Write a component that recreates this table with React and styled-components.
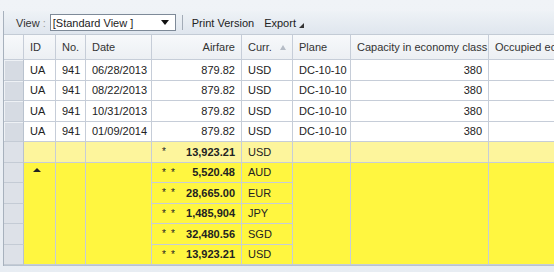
import { Fragment } from "react";
import styled, { createGlobalStyle } from "styled-components";

const GlobalStyle = createGlobalStyle`
  html, body {
    margin: 0;
    padding: 0;
    background: #e9eef4;
    font-family: "Liberation Sans", Arial, sans-serif;
    font-size: 11px;
    color: #222;
  }
`

const Page = styled.div`
  width: 554px;
  height: 272px;
  overflow: hidden;
  padding-top: 11px;
  box-sizing: border-box;
  background: linear-gradient(#f0f3f7, #e8edf3);
`

const Frame = styled.div`
  margin-left: 3px;
  border-left: 1px solid #a7b1bd;
  overflow: hidden;
`

const Toolbar = styled.div`
  display: flex;
  align-items: center;
  height: 23px;
  padding-left: 12px;
  background: linear-gradient(#eef2f6, #dfe6ee);
  border-bottom: 1px solid #c3cbd5;
  color: #333;
`

const Label = styled.span`
  margin-right: 4px;
  & b {
    font-weight: normal;
    color: #999;
  }
`

const Select = styled.div`
  display: flex;
  align-items: center;
  justify-content: space-between;
  width: 126px;
  height: 17px;
  box-sizing: border-box;
  border: 1px solid #7e8a98;
  background: #fff;
  padding: 0 6px 0 2px;
  color: #222;
`

const DownArrow = styled.span`
  width: 0;
  height: 0;
  border-left: 4px solid transparent;
  border-right: 4px solid transparent;
  border-top: 5px solid #111;
`

const Separator = styled.span`
  width: 1px;
  height: 15px;
  background: #a3acb7;
  margin: 0 9px 0 6px;
`

const ToolButton = styled.span`
  display: flex;
  align-items: center;
  margin-right: 10px;
  color: #222;
`

const CornerArrow = styled.span`
  width: 0;
  height: 0;
  margin-left: 3px;
  margin-top: 5px;
  border-left: 5px solid transparent;
  border-bottom: 5px solid #333;
`

const Grid = styled.div`
  display: grid;
  grid-template-columns: 20px 32px 30px 66px 90px 51px 58px 138px 160px;
  grid-template-rows: 25px repeat(10, 20.5px);
  width: 645px;
  border-bottom: 1px solid #b9c3cf;
`

const Cell = styled.div`
  box-sizing: border-box;
  border-right: 1px solid #c6cdd8;
  border-bottom: 1px solid #c6cdd8;
  padding: 0 6px;
  display: flex;
  align-items: ${(p) => (p.$top ? "flex-start" : "center")};
  justify-content: ${(p) => (p.$right ? "flex-end" : "flex-start")};
  white-space: nowrap;
  overflow: hidden;
  font-weight: ${(p) => (p.$bold ? "bold" : "normal")};
  background: ${(p) =>
    p.$tone === "total" ? "#fdf59c" : p.$tone === "group" ? "#fff640" : "#fff"};
  grid-row: ${(p) => (p.$span ? `span ${p.$span}` : "auto")};
  color: #222;
`

const HeadCell = styled.div`
  box-sizing: border-box;
  border-right: 1px solid #c6cdd8;
  border-bottom: 1px solid #c6cdd8;
  padding: 0 6px;
  display: flex;
  align-items: center;
  justify-content: ${(p) => (p.$right ? "flex-end" : "flex-start")};
  white-space: nowrap;
  overflow: hidden;
  background: linear-gradient(#f7f9fb, #eceff3);
  color: #333;
`

const Selector = styled.div`
  box-sizing: border-box;
  border-right: 1px solid #b9c2ce;
  border-bottom: 1px solid #c4cbd5;
  background: ${(p) => (p.$light ? "#dde1e8" : "#d6dbe3")};
  box-shadow: ${(p) => (p.$light ? "none" : "inset 1px 1px 0 #eef1f5")};
`

const SortArrow = styled.span`
  width: 0;
  height: 0;
  margin-left: 8px;
  border-left: 3px solid transparent;
  border-right: 3px solid transparent;
  border-bottom: 5px solid #b5bcc6;
`

const GroupArrow = styled.span`
  width: 0;
  height: 0;
  margin: 5px 0 0 3px;
  border-left: 4px solid transparent;
  border-right: 4px solid transparent;
  border-bottom: 4px solid #222;
`

const Stars = styled.span`
  font-weight: normal;
  font-size: 10px;
  margin-right: auto;
  padding-left: 4px;
  letter-spacing: 5px;
`

const flights = ["06/28/2013", "08/22/2013", "10/31/2013", "01/09/2014"];
const subtotals = [
  ["5,520.48", "AUD"],
  ["28,665.00", "EUR"],
  ["1,485,904", "JPY"],
  ["32,480.56", "SGD"],
  ["13,923.21", "USD"],
];

const App = () => {
  return (
    <Page>
      <GlobalStyle />
      <Frame>
        <Toolbar>
          <Label>
            View <b>:</b>
          </Label>
          <Select>
            [Standard View ]
            <DownArrow />
          </Select>
          <Separator />
          <ToolButton>Print Version</ToolButton>
          <ToolButton>
            Export
            <CornerArrow />
          </ToolButton>
        </Toolbar>
        <Grid>
          <HeadCell />
          <HeadCell>ID</HeadCell>
          <HeadCell>No.</HeadCell>
          <HeadCell>Date</HeadCell>
          <HeadCell $right>Airfare</HeadCell>
          <HeadCell>
            Curr.
            <SortArrow />
          </HeadCell>
          <HeadCell>Plane</HeadCell>
          <HeadCell>Capacity in economy class</HeadCell>
          <HeadCell>Occupied economy class</HeadCell>

          {flights.map((date) => (
            <Fragment key={date}>
              <Selector />
              <Cell>UA</Cell>
              <Cell>941</Cell>
              <Cell>{date}</Cell>
              <Cell $right>879.82</Cell>
              <Cell>USD</Cell>
              <Cell>DC-10-10</Cell>
              <Cell $right>380</Cell>
              <Cell />
            </Fragment>
          ))}

          <Selector $light />
          <Cell $tone="total" />
          <Cell $tone="total" />
          <Cell $tone="total" />
          <Cell $tone="total" $bold $right>
            <Stars>*</Stars>13,923.21
          </Cell>
          <Cell $tone="total">USD</Cell>
          <Cell $tone="total" />
          <Cell $tone="total" />
          <Cell $tone="total" />

          {subtotals.map(([amount, curr], i) => (
            <Fragment key={curr}>
              <Selector $light />
              {i === 0 && (
                <>
                  <Cell $tone="group" $span={5} $top>
                    <GroupArrow />
                  </Cell>
                  <Cell $tone="group" $span={5} />
                  <Cell $tone="group" $span={5} />
                </>
              )}
              <Cell $tone="group" $bold $right>
                <Stars>**</Stars>
                {amount}
              </Cell>
              <Cell $tone="group">{curr}</Cell>
              {i === 0 && (
                <>
                  <Cell $tone="group" $span={5} />
                  <Cell $tone="group" $span={5} />
                  <Cell $tone="group" $span={5} />
                </>
              )}
            </Fragment>
          ))}
        </Grid>
      </Frame>
    </Page>
  );
};

export default App;
